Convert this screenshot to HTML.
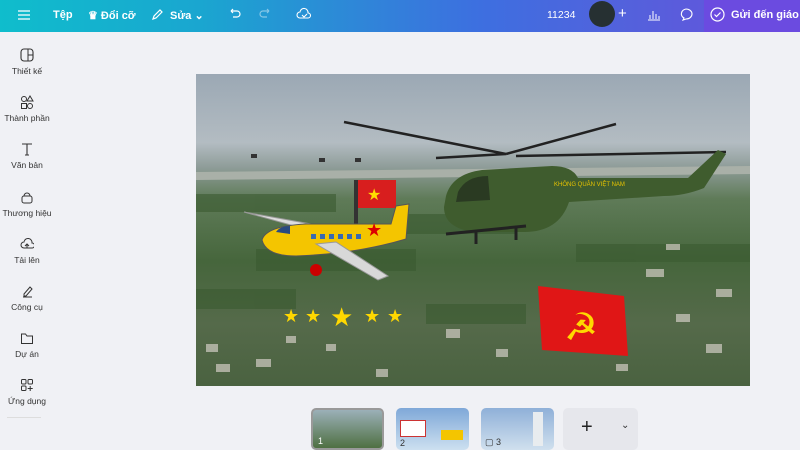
<!DOCTYPE html>
<html><head><meta charset="utf-8"><style>
*{margin:0;padding:0;box-sizing:border-box}
body{width:800px;height:450px;overflow:hidden;background:#f0f1f5;font-family:"Liberation Sans",sans-serif;position:relative}
.top{position:absolute;left:0;top:0;width:800px;height:32px;background:linear-gradient(90deg,#0fbdcc 0%,#1aa6d0 25%,#2f86d8 45%,#3d6fe0 60%,#5560dc 80%,#6a4fdc 100%);color:#fff;font-size:11px;font-weight:bold;overflow:hidden}
.top span{position:absolute;top:9px;white-space:nowrap}
.side{position:absolute;left:0;top:32px;width:54px;height:418px}
.si{position:absolute;left:0;width:54px;text-align:center;font-size:8.5px;color:#333}
.si svg{display:block;margin:0 auto 4px}
.img{position:absolute;left:196px;top:74px;width:554px;height:312px;overflow:hidden}
.th{position:absolute;top:408px;height:42px;border-radius:5px;overflow:hidden}
</style></head><body>
<div class="top">
<svg style="position:absolute;left:17px;top:9px" width="14" height="12"><path d="M1 2h12M1 6h12M1 10h12" stroke="#fff" stroke-width="1.3"/></svg>
<span style="left:53px">Tệp</span>
<span style="left:88px">♛ Đổi cỡ</span>
<svg style="position:absolute;left:151px;top:8px" width="13" height="13"><path d="M2 11l1-3 6-6 2 2-6 6z" fill="none" stroke="#fff" stroke-width="1.2"/></svg>
<span style="left:170px">Sửa ⌄</span>
<svg style="position:absolute;left:228px;top:8px" width="14" height="12"><path d="M3 3h6a3 3 0 010 6H5M3 3l2-2M3 3l2 2" fill="none" stroke="#fff" stroke-width="1.2"/></svg>
<svg style="position:absolute;left:258px;top:8px" width="14" height="12" opacity=".45"><path d="M11 3H5a3 3 0 000 6h4M11 3l-2-2M11 3l-2 2" fill="none" stroke="#fff" stroke-width="1.2"/></svg>
<svg style="position:absolute;left:296px;top:7px" width="16" height="14"><path d="M4 11a3 3 0 010-6 4 4 0 018 1 2.5 2.5 0 010 5z M6 8l2 2 3-3" fill="none" stroke="#fff" stroke-width="1.1"/></svg>
<span style="left:547px;font-weight:normal;font-size:10.5px">11234</span>
<div style="position:absolute;left:589px;top:1px;width:26px;height:26px;border-radius:50%;background:#263032"></div>
<span style="left:618px;top:5px;font-size:15px;font-weight:normal">+</span>
<svg style="position:absolute;left:647px;top:8px" width="14" height="13"><path d="M1 12h12M3 11V7M6 11V3M9 11V6M12 11V8" stroke="#fff" stroke-width="1"/></svg>
<svg style="position:absolute;left:679px;top:8px" width="14" height="13"><path d="M7 1a6 5 0 016 5 6 5 0 01-6 5l-3 1 1-2a6 5 0 012-9z" fill="none" stroke="#fff" stroke-width="1.1"/></svg>
<div style="position:absolute;left:704px;top:0;width:96px;height:32px;background:#6b4be0"></div>
<svg style="position:absolute;left:710px;top:7px" width="15" height="15"><circle cx="7.5" cy="7.5" r="6.5" fill="none" stroke="#fff" stroke-width="1.2"/><path d="M4.5 7.5l2 2 4-4" fill="none" stroke="#fff" stroke-width="1.2"/></svg>
<span style="left:731px">Gửi đến giáo viên</span>
</div>
<div class="side">
<div class="si" style="top:16px"><svg width="14" height="14"><rect x="1" y="1" width="12" height="12" rx="3" fill="none" stroke="#333" stroke-width="1.1"/><path d="M8 1v12M8 7h5" stroke="#333"/></svg>Thiết kế</div>
<div class="si" style="top:63px"><svg width="14" height="14"><circle cx="4" cy="4" r="2.5" fill="none" stroke="#333"/><path d="M10 1l3 5H7z" fill="none" stroke="#333"/><rect x="1.5" y="8.5" width="5" height="5" fill="none" stroke="#333"/><circle cx="10" cy="11" r="2.5" fill="none" stroke="#333"/></svg>Thành phần</div>
<div class="si" style="top:110px"><svg width="14" height="14"><path d="M2 2h10M7 2v11M5 13h4" stroke="#333" stroke-width="1.1" fill="none"/></svg>Văn bản</div>
<div class="si" style="top:158px"><svg width="14" height="14"><rect x="2" y="6" width="10" height="7" rx="2" fill="none" stroke="#333"/><path d="M4 6a3 3 0 016 0" fill="none" stroke="#333"/></svg>Thương hiệu</div>
<div class="si" style="top:205px"><svg width="14" height="14"><path d="M4 11a3 3 0 010-6 4 4 0 018 1 2.5 2.5 0 010 5z M7 11V7M5 9l2-2 2 2" fill="none" stroke="#333"/></svg>Tải lên</div>
<div class="si" style="top:252px"><svg width="14" height="14"><path d="M3 13h9M4 10l6-7 2 2-6 7H4z" fill="none" stroke="#333"/></svg>Công cụ</div>
<div class="si" style="top:299px"><svg width="14" height="14"><path d="M1.5 3h4l1.5 2h5.5v7.5h-11z" fill="none" stroke="#333"/></svg>Dự án</div>
<div class="si" style="top:346px"><svg width="14" height="14"><rect x="1.5" y="1.5" width="4.5" height="4.5" rx="1" fill="none" stroke="#333"/><rect x="8" y="1.5" width="4.5" height="4.5" rx="1" fill="none" stroke="#333"/><rect x="1.5" y="8" width="4.5" height="4.5" rx="1" fill="none" stroke="#333"/><path d="M10.2 8v5M7.7 10.5h5" stroke="#333"/></svg>Ứng dụng</div>
<div style="position:absolute;left:7px;top:385px;width:34px;height:1px;background:#ddd"></div>
</div>
<div class="img">
<svg width="554" height="312">
<defs><linearGradient id="g" x1="0" y1="0" x2="0" y2="1">
<stop offset="0" stop-color="#9ba8b4"/><stop offset=".22" stop-color="#b3bcc2"/><stop offset=".3" stop-color="#8e9c98"/><stop offset=".4" stop-color="#5f7b58"/><stop offset=".6" stop-color="#46663c"/><stop offset=".8" stop-color="#556a4a"/><stop offset="1" stop-color="#4a6240"/></linearGradient></defs>
<rect width="554" height="312" fill="url(#g)"/>
<path d="M0 98 L554 92 L554 100 L0 106z" fill="#a9b0a8"/>
<g fill="#3a5a30" opacity=".6"><rect x="0" y="120" width="140" height="18"/><rect x="200" y="140" width="120" height="20"/><rect x="60" y="175" width="160" height="22"/><rect x="380" y="170" width="174" height="18"/><rect x="0" y="215" width="100" height="20"/><rect x="230" y="230" width="100" height="20"/></g>
<g fill="#c9c6bc" opacity=".75"><rect x="10" y="270" width="12" height="8"/><rect x="60" y="285" width="15" height="8"/><rect x="130" y="270" width="10" height="7"/><rect x="250" y="255" width="14" height="9"/><rect x="300" y="275" width="12" height="8"/><rect x="450" y="195" width="18" height="8"/><rect x="480" y="240" width="14" height="8"/><rect x="510" y="270" width="16" height="9"/><rect x="420" y="290" width="12" height="7"/><rect x="20" y="290" width="14" height="8"/><rect x="180" y="295" width="12" height="8"/><rect x="470" y="170" width="14" height="6"/><rect x="520" y="215" width="16" height="8"/><rect x="90" y="262" width="10" height="7"/></g>
<!-- helicopter -->
<path d="M148 48 L310 80 M310 80 L420 50 M310 80 L240 84 M320 82 L530 78" stroke="#222" stroke-width="2.5" fill="none"/>
<path d="M250 122 q6-22 36-26 l70 -4 q20 0 26 12 l110 0 l30-28 l8 4 l-22 34 q-20 8-40 8 l-95 6 q-10 30-45 30 l-50 0 q-30 -4-30 -25z" fill="#3f5c2e"/>
<path d="M262 118 q8-16 30-16 l2 24 -34 2z" fill="#2a3a22"/>
<path d="M250 160 l80 -8 M280 158 v12 M320 154 v12" stroke="#222" stroke-width="3"/>
<text x="358" y="112" font-size="6" fill="#e8c400">KHÔNG QUÂN VIỆT NAM</text>
<!-- small helis -->
<g fill="#333"><rect x="55" y="80" width="6" height="4"/><rect x="123" y="84" width="6" height="4"/><rect x="159" y="84" width="6" height="4"/></g>
<!-- flag -->
<rect x="158" y="106" width="4" height="52" fill="#333"/>
<rect x="162" y="106" width="38" height="28" fill="#d81e1e"/>
<text x="171" y="126" font-size="16" fill="#ffde00">★</text>
<!-- plane -->
<path d="M48 138 L120 158 L126 152z" fill="#ddd" stroke="#999"/>
<path d="M66 166 Q70 152 110 150 L195 150 L200 132 L213 130 L210 165 Q160 180 100 182 Q70 182 66 166z" fill="#f4c500" stroke="#555"/>
<g fill="#3a6ab0"><rect x="115" y="160" width="5" height="5"/><rect x="124" y="160" width="5" height="5"/><rect x="133" y="160" width="5" height="5"/><rect x="142" y="160" width="5" height="5"/><rect x="151" y="160" width="5" height="5"/><rect x="160" y="160" width="5" height="5"/></g>
<path d="M80 158 q4-6 14-6 l0 8z" fill="#2a4a80"/>
<path d="M120 170 L182 206 L192 202 L140 168z" fill="#d8d8d8" stroke="#999"/>
<circle cx="120" cy="196" r="6" fill="#c00"/>
<text x="170" y="162" fill="#d00" font-size="18">★</text>
<!-- stars -->
<text x="87" y="248" font-size="18" fill="#ffd800">★</text><text x="109" y="248" font-size="18" fill="#ffd800">★</text><text x="134" y="252" font-size="26" fill="#ffd800">★</text><text x="168" y="248" font-size="18" fill="#ffd800">★</text><text x="191" y="248" font-size="18" fill="#ffd800">★</text>
<!-- party flag -->
<path d="M342 212 L428 222 L432 282 L346 276z" fill="#e01616"/>
<text x="368" y="266" font-size="38" fill="#ffd800">☭</text>
</svg>
</div>
<div class="th" style="left:311px;width:73px;border:2px solid #999;background:linear-gradient(180deg,#9bb0b8,#4f7042)"><span style="position:absolute;left:5px;bottom:2px;font-size:9px;color:#fff">1</span></div>
<div class="th" style="left:396px;width:73px;background:linear-gradient(180deg,#7fa8d8,#cde0f0)"><div style="position:absolute;left:4px;top:12px;width:26px;height:17px;background:#fff;border:1px solid #c33"></div><div style="position:absolute;left:45px;top:22px;width:22px;height:10px;background:#f4c500"></div><span style="position:absolute;left:4px;bottom:2px;font-size:9px;color:#333">2</span></div>
<div class="th" style="left:481px;width:73px;background:linear-gradient(180deg,#8fb0d8,#d0e0ee)"><div style="position:absolute;left:52px;top:4px;width:10px;height:34px;background:#e8ecef"></div><span style="position:absolute;left:4px;bottom:2px;font-size:9px;color:#333">▢ 3</span></div>
<div class="th" style="left:563px;width:75px;background:#e6e7ec"><span style="position:absolute;left:18px;top:8px;font-size:20px;color:#222">+</span><span style="position:absolute;left:58px;top:12px;font-size:10px;color:#333">⌄</span></div>
</body></html>
